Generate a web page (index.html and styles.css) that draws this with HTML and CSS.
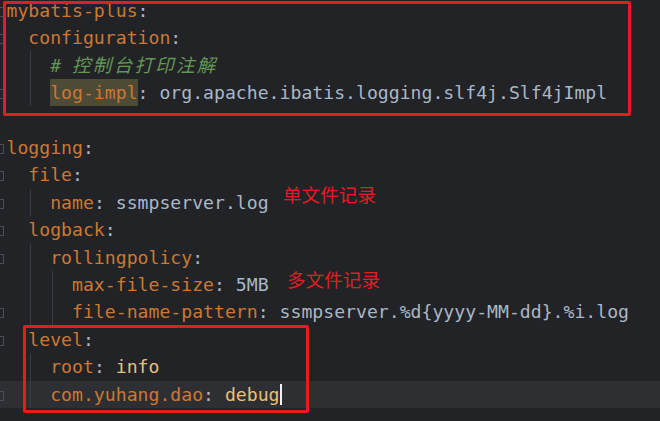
FILE: index.html
```html
<!DOCTYPE html>
<html lang="zh-CN">
<head>
    <meta charset="UTF-8">
    <title>application.yml</title>
    <link rel="stylesheet" href="styles.css">
</head>
<body>
    <div class="editor">
        <div class="line fold"><span class="k">mybatis-plus</span><span class="p">:</span></div>
        <div class="line fold">  <span class="k">configuration</span><span class="p">:</span></div>
        <div class="line g1">    <span class="c"># <span class="cjk">控制台打印注解</span></span></div>
        <div class="line fold g1">    <span class="k hl">log-impl</span><span class="p">:</span> <span class="v">org.apache.ibatis.logging.slf4j.Slf4jImpl</span></div>
        <div class="line"> </div>
        <div class="line fold"><span class="k">logging</span><span class="p">:</span></div>
        <div class="line fold">  <span class="k">file</span><span class="p">:</span></div>
        <div class="line fold g1">    <span class="k">name</span><span class="p">:</span> <span class="v">ssmpserver.log</span></div>
        <div class="line fold">  <span class="k">logback</span><span class="p">:</span></div>
        <div class="line fold g1">    <span class="k">rollingpolicy</span><span class="p">:</span></div>
        <div class="line g2">      <span class="k">max-file-size</span><span class="p">:</span> <span class="v">5MB</span></div>
        <div class="line fold g2">      <span class="k">file-name-pattern</span><span class="p">:</span> <span class="v">ssmpserver.%d{yyyy-MM-dd}.%i.log</span></div>
        <div class="line fold">  <span class="k">level</span><span class="p">:</span></div>
        <div class="line g1">    <span class="k">root</span><span class="p">:</span> <span class="e">info</span></div>
        <div class="line fold g1 current">    <span class="k">com.yuhang.dao</span><span class="p">:</span> <span class="e">debug</span><span class="caret"></span></div>
        <div class="line"> </div>

        <!-- marcas rojas sobre la captura -->
        <div class="mark mark-top"></div>
        <div class="mark mark-level"></div>
        <div class="note note-single">单文件记录</div>
        <div class="note note-multi">多文件记录</div>
    </div>
</body>
</html>
```

FILE: styles.css
```css
:root {
    --bg: #222326;
    --current: #2e2f33;
    --key: #cc7832;
    --val: #a9b7c6;
    --enum: #e6c07b;
    --comment: #629755;
    --guide: #393b40;
    --red: #e51c24;
}

* {
    margin: 0;
    padding: 0;
    box-sizing: border-box;
}

html, body {
    height: 100%;
}

body {
    background: var(--bg);
    overflow: hidden;
}

.editor {
    position: relative;
    margin-top: -3.4px;
    font-family: "DejaVu Sans Mono", "Liberation Mono", monospace;
    font-size: 18.15px;
    line-height: 27.45px;
    color: var(--val);
}

.line {
    white-space: pre;
    height: 27.45px;
}

/* hueco del margen con los marcadores de plegado */
.line::before {
    content: "";
    display: inline-block;
    width: 3px;
    height: 8px;
    margin-right: 2.5px;
    border: 1px solid transparent;
    border-left: 0;
    vertical-align: middle;
}

.fold::before {
    border-color: #4b4e54;
}

/* guías de indentación */
.g1 {
    background: linear-gradient(var(--guide), var(--guide)) no-repeat 29.5px 0 / 1px 100%;
}

.g2 {
    background:
        linear-gradient(var(--guide), var(--guide)) no-repeat 29.5px 0 / 1px 100%,
        linear-gradient(var(--guide), var(--guide)) no-repeat 51.5px 0 / 1px 100%;
}

.current {
    background-color: var(--current);
}

.k { color: var(--key); }
.p { color: var(--val); }
.v { color: var(--val); }
.e { color: var(--enum); }

.c {
    color: var(--comment);
    font-style: italic;
}

.cjk {
    font-family: "Noto Sans CJK SC", sans-serif;
    font-size: 18.5px;
    letter-spacing: 2.3px;
}

.hl {
    background: #4d4a35;
    padding: 3.2px 0;
}

.caret {
    display: inline-block;
    width: 2px;
    height: 21px;
    background: #f2f2f2;
    vertical-align: middle;
    margin-top: -3px;
}

/* recuadros y notas rojas */
.mark {
    position: absolute;
    border: 3.5px solid var(--red);
    border-radius: 2px;
}

.mark-top {
    left: 3px;
    top: 4.4px;
    width: 628px;
    height: 115px;
}

.mark-level {
    left: 23px;
    top: 328.4px;
    width: 286px;
    height: 88px;
}

.note {
    position: absolute;
    font-family: "Noto Sans CJK SC", sans-serif;
    font-size: 18.6px;
    line-height: 1;
    color: var(--red);
}

.note-single {
    left: 283px;
    top: 188px;
}

.note-multi {
    left: 287px;
    top: 273px;
}
```
